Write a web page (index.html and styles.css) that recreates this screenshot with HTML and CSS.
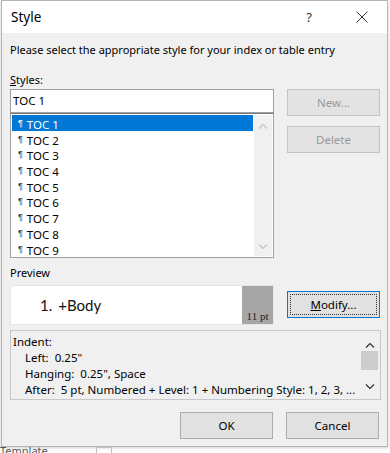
FILE: index.html
```html
<!DOCTYPE html>
<html lang="en">
<head>
  <meta charset="UTF-8">
  <meta name="viewport" content="width=device-width, initial-scale=1.0">
  <title>Style</title>
<link rel="stylesheet" href="styles.css">
</head>
<body>
  <div class="dialog">
    <div class="titlebar">
      <span class="title">Style</span>
      <span class="help">?</span>
      <svg class="close" width="12" height="12" viewBox="0 0 12 12">
        <path d="M0.5 0.5 L11.5 11.5 M11.5 0.5 L0.5 11.5" stroke="#333" stroke-width="1" fill="none"/>
      </svg>
    </div>

    <div class="content">
      <p class="intro">Please select the appropriate style for your index or table entry</p>
      <label class="label styles-label"><u>S</u>tyles:</label>

      <div class="styles-row">
        <div class="styles-col">
          <div class="style-input">TOC 1</div>
          <div class="style-list">
            <ul class="items">
              <li class="selected"><span class="pil">¶</span>TOC 1</li>
              <li><span class="pil">¶</span>TOC 2</li>
              <li><span class="pil">¶</span>TOC 3</li>
              <li><span class="pil">¶</span>TOC 4</li>
              <li><span class="pil">¶</span>TOC 5</li>
              <li><span class="pil">¶</span>TOC 6</li>
              <li><span class="pil">¶</span>TOC 7</li>
              <li><span class="pil">¶</span>TOC 8</li>
              <li><span class="pil">¶</span>TOC 9</li>
            </ul>
            <div class="vscroll">
              <svg width="10" height="6" viewBox="0 0 10 6"><path d="M1 5.5 L5 1.5 L9 5.5" stroke="#c2c2c2" stroke-width="1.2" fill="none"/></svg>
              <svg width="10" height="6" viewBox="0 0 10 6"><path d="M1 0.5 L5 4.5 L9 0.5" stroke="#c2c2c2" stroke-width="1.2" fill="none"/></svg>
            </div>
          </div>
        </div>
        <div class="side-buttons">
          <button class="btn disabled">New...</button>
          <button class="btn disabled">Delete</button>
        </div>
      </div>

      <div class="label preview-label">Preview</div>
      <div class="preview-row">
        <div class="preview">
          <div class="preview-text"><span class="num">1.</span>+Body</div>
          <div class="pt-box">11 pt</div>
        </div>
        <button class="btn focused"><span class="focus-ring"><u>M</u>odify...</span></button>
      </div>

      <div class="desc">
        <div class="desc-text">
          <div>Indent:</div>
          <div class="ind">Left:&nbsp; 0.25"</div>
          <div class="ind">Hanging:&nbsp; 0.25", Space</div>
          <div class="ind">After:&nbsp; 5 pt, Numbered + Level: 1 + Numbering Style: 1, 2, 3, ...</div>
        </div>
        <div class="desc-scroll">
          <svg width="10" height="6" viewBox="0 0 10 6"><path d="M1 5.5 L5 1.5 L9 5.5" stroke="#333" stroke-width="1.2" fill="none"/></svg>
          <div class="thumb"></div>
          <svg width="10" height="6" viewBox="0 0 10 6"><path d="M1 0.5 L5 4.5 L9 0.5" stroke="#333" stroke-width="1.2" fill="none"/></svg>
        </div>
      </div>

      <div class="actions">
        <button class="btn">OK</button>
        <button class="btn">Cancel</button>
      </div>
    </div>
  </div>
  <div class="behind">
    <span class="behind-text">Template</span>
    <span class="behind-drop"></span>
  </div>
</body>
</html>
```

FILE: styles.css
```css
body {
  margin: 0;
  padding: 0;
  background-color: #ffffff;
  font-family: "Noto Sans", "Open Sans", sans-serif;
  font-size: 11px;
  color: #000;
}

.dialog {
  margin-left: 1px;
  width: 385px;
  height: 445px;
  border: 1px solid #b4b4b4;
  background-color: #f0f0f0;
  box-shadow: 0 1px 3px rgba(0, 0, 0, 0.2);
}

.titlebar {
  height: 32px;
  background-color: #ffffff;
  display: flex;
  align-items: center;
  padding-left: 9px;
}

.title {
  font-size: 13.5px;
  flex: 1;
}

.help {
  font-size: 13px;
  color: #333;
  margin-right: 44px;
}

.close {
  margin-right: 19px;
}

.content {
  padding: 0 7px 0 8px;
}

.intro {
  margin: 9px 0 0 0;
  line-height: 16px;
}

.label {
  display: block;
  line-height: 16px;
}

.styles-label {
  margin-top: 14px;
}

.styles-row {
  display: flex;
  margin-top: 1px;
}

.styles-col {
  width: 264px;
}

.style-input {
  height: 22px;
  border: 1px solid #a0a0a0;
  background-color: #fff;
  line-height: 22px;
  padding-left: 2px;
  font-size: 11.5px;
}

.style-list {
  height: 143px;
  border: 1px solid #a0a0a0;
  border-top-color: #7a7a7a;
  background-color: #fff;
  display: flex;
}

.items {
  list-style: none;
  margin: 0;
  padding: 1px 0 0 1px;
  flex: 1;
}

.items li {
  height: 15.7px;
  line-height: 16px;
  padding-left: 6px;
  color: #000;
  white-space: nowrap;
  font-size: 11.5px;
}

.items li.selected {
  background-color: #0078d7;
  color: #fff;
}

.pil {
  font-family: "Liberation Sans", sans-serif;
  font-size: 9px;
  vertical-align: 3px;
  margin-right: 4px;
  color: #333;
}

.selected .pil {
  color: #fff;
}

.vscroll {
  width: 18px;
  margin: 1px;
  background-color: #f0f0f0;
  display: flex;
  flex-direction: column;
  align-items: center;
  justify-content: space-between;
  padding: 8px 0 6px 0;
}

.side-buttons {
  display: flex;
  flex-direction: column;
  gap: 10px;
  margin-left: 13px;
}

.btn {
  width: 93px;
  height: 27px;
  border: 1px solid #adadad;
  background-color: #e1e1e1;
  font-family: "Noto Sans", "Open Sans", sans-serif;
  font-size: 11.5px;
  color: #000;
  padding: 0;
}

.btn.disabled {
  border-color: #c4c4c4;
  background-color: #e3e3e3;
  color: #9a9a9a;
}

.preview-label {
  margin-top: 7px;
}

.preview-row {
  display: flex;
  align-items: flex-start;
  margin-top: 4px;
}

.preview {
  width: 262px;
  height: 38px;
  border: 1px solid #e6e6e6;
  background-color: #fff;
  display: flex;
}

.preview-text {
  flex: 1;
  font-family: Lato, "Open Sans", sans-serif;
  font-size: 15px;
  line-height: 38px;
  padding-left: 29px;
  color: #111;
}

.num {
  margin-right: 6px;
}

.pt-box {
  width: 31px;
  background-color: #a6a6a6;
  font-family: "Liberation Serif", serif;
  font-size: 11px;
  display: flex;
  align-items: flex-end;
  justify-content: center;
  padding-bottom: 2px;
  color: #222;
}

.btn.focused {
  margin-left: 13px;
  margin-top: 6px;
  border: 1px solid #0078d7;
  padding: 2px;
}

.focus-ring {
  display: block;
  height: 19px;
  line-height: 19px;
  border: 1px dotted #333;
}

.desc {
  margin-top: 5px;
  width: 369px;
  height: 68px;
  border: 1px solid #c8c8c8;
  display: flex;
}

.desc-text {
  flex: 1;
  padding: 3px 0 0 2px;
  line-height: 16px;
  white-space: nowrap;
  font-size: 11.5px;
}

.ind {
  padding-left: 12px;
}

.desc-scroll {
  width: 19px;
  margin: 1px 1px 1px 0;
  display: flex;
  flex-direction: column;
  align-items: center;
  padding: 10px 0 8px 0;
}

.thumb {
  width: 17px;
  height: 19px;
  background-color: #cdcdcd;
  margin: 3px 0 auto 0;
}

.actions {
  display: flex;
  justify-content: flex-end;
  gap: 13px;
  margin-top: 12px;
  padding-right: 1px;
}

.behind {
  height: 6px;
  overflow: hidden;
  display: flex;
}

.behind-text {
  margin-top: -4px;
  font-size: 11px;
  color: #555;
  width: 96px;
}

.behind-drop {
  width: 14px;
  height: 8px;
  border: 1px solid #c0c0c0;
}
```
